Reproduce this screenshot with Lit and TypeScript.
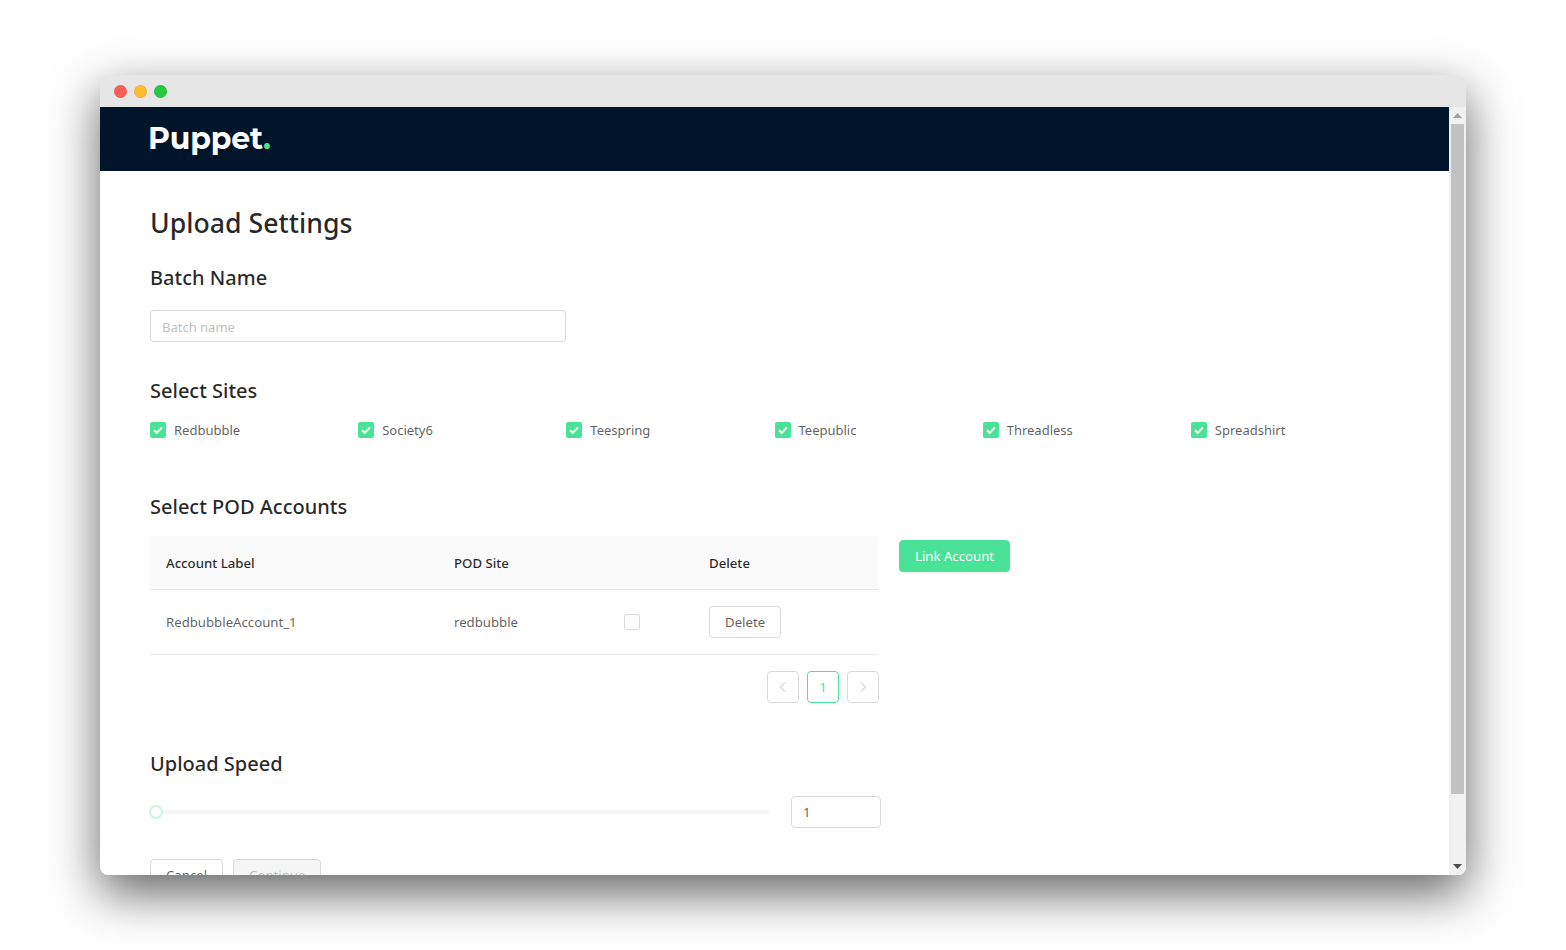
import { LitElement, html, css } from "lit";
import { customElement } from "lit/decorators.js";

const SITES = ["Redbubble", "Society6", "Teespring", "Teepublic", "Threadless", "Spreadshirt"];

@customElement("app-root")
export class AppRoot extends LitElement {
  static styles = css`
    :host {
      display: block;
      height: 950px;
      padding: 75px 100px 0;
      box-sizing: border-box;
      background: #fff;
      overflow: hidden;
      font-family: "Noto Sans", "Open Sans", sans-serif;
      font-size: 13.2px;
      color: rgba(0, 0, 0, 0.65);
    }
    .window {
      height: 800px;
      border-radius: 8px;
      overflow: hidden;
      background: #fff;
      box-shadow: 0 18px 50px rgba(0, 0, 0, 0.62);
      display: flex;
      flex-direction: column;
    }
    .titlebar {
      height: 32px;
      flex: none;
      box-sizing: border-box;
      background: #e6e6e6;
      display: flex;
      align-items: center;
      gap: 7px;
      padding: 1px 0 0 13.5px;
    }
    .dot {
      width: 13px;
      height: 13px;
      border-radius: 50%;
      box-sizing: border-box;
      border: 1px solid rgba(0, 0, 0, 0.06);
    }
    .red { background: #ff5f57; }
    .yellow { background: #ffbd2e; }
    .green { background: #28c840; }
    .body {
      flex: 1;
      min-height: 0;
      display: flex;
    }
    .page {
      flex: 1;
      min-width: 0;
      overflow: hidden;
    }
    .scrollbar {
      width: 17px;
      flex: none;
      background: #f1f1f1;
      display: flex;
      flex-direction: column;
      align-items: center;
    }
    .arrow {
      height: 17px;
      flex: none;
      display: flex;
      align-items: center;
      justify-content: center;
    }
    .thumb {
      width: 13px;
      height: 670px;
      background: #c1c1c1;
    }
    .spacer { flex: 1; }
    header {
      height: 64px;
      background: #00152a;
      padding-left: 48px;
      display: flex;
      align-items: center;
      box-sizing: border-box;
    }
    .logo {
      font-family: "Montserrat", "Inter", "Noto Sans", sans-serif;
      font-weight: 700;
      font-size: 30px;
      line-height: 64px;
      letter-spacing: -0.2px;
      color: #fff;
    }
    .logo span { color: #4ae296; }
    main {
      padding: 32px 50px 0;
    }
    h1, h2 {
      margin: 0;
      font-weight: 500;
      color: rgba(0, 0, 0, 0.85);
    }
    h1 {
      font-size: 26.7px;
      line-height: 40px;
    }
    h2 {
      font-size: 20px;
      line-height: 28px;
    }
    .batch-title { margin-top: 21px; }
    .text {
      display: block;
      width: 416px;
      height: 32px;
      box-sizing: border-box;
      border: 1px solid #d9d9d9;
      border-radius: 4px;
      padding: 0 11px;
      line-height: 32px;
      margin-top: 18px;
      color: #bfbfbf;
      font-size: 13px;
    }
    .sites-title { margin-top: 35px; }
    .sites {
      display: grid;
      grid-template-columns: repeat(6, 1fr);
      margin-top: 14px;
      height: 22px;
    }
    .site {
      display: flex;
      align-items: center;
      gap: 8px;
      line-height: 22px;
      font-size: 13px;
    }
    .check {
      width: 16px;
      height: 16px;
      border-radius: 2px;
      background: #4ae296;
      display: flex;
      align-items: center;
      justify-content: center;
    }
    .pod-title { margin-top: 52px; }
    .accounts {
      display: flex;
      align-items: flex-start;
      gap: 21px;
      margin-top: 15px;
    }
    .table { width: 728px; }
    .row {
      display: grid;
      grid-template-columns: 288px 255px 185px;
      align-items: center;
      border-bottom: 1px solid #e8e8e8;
    }
    .head {
      height: 54px;
      box-sizing: border-box;
      background: #fafafa;
      border-radius: 4px 4px 0 0;
      font-weight: 500;
      color: rgba(0, 0, 0, 0.85);
    }
    .cell { padding-left: 16px; }
    .item { height: 65px; box-sizing: border-box; }
    .site-cell {
      display: flex;
      align-items: center;
      padding-right: 53px;
      justify-content: space-between;
    }
    .box {
      width: 16px;
      height: 16px;
      box-sizing: border-box;
      border: 1px solid #d9d9d9;
      border-radius: 2px;
      background: #fff;
    }
    .btn {
      display: inline-block;
      height: 32px;
      line-height: 30px;
      padding: 0 15px;
      box-sizing: border-box;
      border: 1px solid #d9d9d9;
      border-radius: 4px;
      background: #fff;
      white-space: nowrap;
    }
    .primary {
      background: #4ae296;
      border-color: #4ae296;
      color: #fff;
      box-shadow: 0 2px 0 rgba(0, 0, 0, 0.045);
      margin-top: 4px;
    }
    .pager {
      width: 729px;
      display: flex;
      justify-content: flex-end;
      gap: 8px;
      margin-top: 16px;
    }
    .pg {
      width: 32px;
      height: 32px;
      box-sizing: border-box;
      border: 1px solid #d9d9d9;
      border-radius: 4px;
      display: flex;
      align-items: center;
      justify-content: center;
      color: #bfbfbf;
    }
    .pg.on {
      border-color: #4ae296;
      color: #4ae296;
    }
    .speed-title { margin-top: 47px; }
    .speed {
      display: flex;
      align-items: center;
      margin-top: 18px;
      width: 731px;
      justify-content: space-between;
    }
    .slider {
      width: 619px;
      height: 4px;
      border-radius: 2px;
      background: #f5f5f5;
      position: relative;
    }
    .handle {
      position: absolute;
      left: -1px;
      top: -5px;
      width: 14px;
      height: 14px;
      box-sizing: border-box;
      border: 2px solid #c9f6df;
      border-radius: 50%;
      background: #fff;
    }
    .num {
      width: 90px;
      height: 32px;
      box-sizing: border-box;
      border: 1px solid #d9d9d9;
      border-radius: 4px;
      padding: 0 11px;
      line-height: 30px;
    }
    .actions {
      display: flex;
      gap: 10px;
      margin-top: 31px;
    }
    .disabled {
      background: #f5f5f5;
      color: rgba(0, 0, 0, 0.25);
    }
  `;

  render() {
    return html`
      <div class="window">
        <div class="titlebar">
          <span class="dot red"></span>
          <span class="dot yellow"></span>
          <span class="dot green"></span>
        </div>
        <div class="body">
          <div class="page">
            <header><div class="logo">Puppet<span>.</span></div></header>
            <main>
              <h1>Upload Settings</h1>
              <h2 class="batch-title">Batch Name</h2>
              <div class="text">Batch name</div>

              <h2 class="sites-title">Select Sites</h2>
              <div class="sites">
                ${SITES.map(
                  (s) => html`
                    <div class="site">
                      <span class="check">
                        <svg width="12" height="12" viewBox="0 0 12 12">
                          <path d="M2 6.2l2.8 2.7L10 3.4" fill="none" stroke="#fff" stroke-width="2" />
                        </svg>
                      </span>
                      ${s}
                    </div>
                  `
                )}
              </div>

              <h2 class="pod-title">Select POD Accounts</h2>
              <div class="accounts">
                <div class="table">
                  <div class="row head">
                    <div class="cell">Account Label</div>
                    <div class="cell">POD Site</div>
                    <div class="cell">Delete</div>
                  </div>
                  <div class="row item">
                    <div class="cell">RedbubbleAccount_1</div>
                    <div class="cell site-cell">redbubble<span class="box"></span></div>
                    <div class="cell"><span class="btn">Delete</span></div>
                  </div>
                </div>
                <span class="btn primary">Link Account</span>
              </div>
              <div class="pager">
                <span class="pg">
                  <svg width="12" height="12" viewBox="0 0 12 12">
                    <path d="M8 1.5L3.5 6 8 10.5" fill="none" stroke="#bfbfbf" />
                  </svg>
                </span>
                <span class="pg on">1</span>
                <span class="pg">
                  <svg width="12" height="12" viewBox="0 0 12 12">
                    <path d="M4 1.5L8.5 6 4 10.5" fill="none" stroke="#bfbfbf" />
                  </svg>
                </span>
              </div>

              <h2 class="speed-title">Upload Speed</h2>
              <div class="speed">
                <div class="slider"><span class="handle"></span></div>
                <div class="num">1</div>
              </div>
              <div class="actions">
                <span class="btn">Cancel</span>
                <span class="btn disabled">Continue</span>
              </div>
            </main>
          </div>
          <div class="scrollbar">
            <div class="arrow">
              <svg width="9" height="5" viewBox="0 0 9 5"><path d="M4.5 0L9 5H0z" fill="#a3a3a3" /></svg>
            </div>
            <div class="thumb"></div>
            <div class="spacer"></div>
            <div class="arrow">
              <svg width="9" height="5" viewBox="0 0 9 5"><path d="M0 0h9L4.5 5z" fill="#505050" /></svg>
            </div>
          </div>
        </div>
      </div>
    `;
  }
}
